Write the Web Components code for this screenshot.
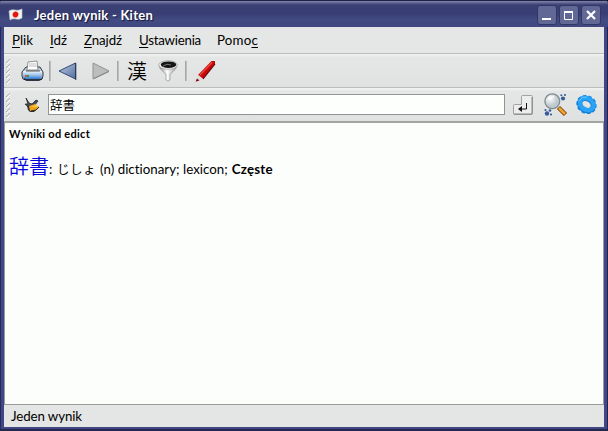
<!DOCTYPE html>
<html lang="pl"><head><meta charset="utf-8"><title>Jeden wynik - Kiten</title>
<style>html,body{margin:0;width:608px;height:431px;overflow:hidden;background:#111}</style></head>
<body><kiten-window></kiten-window>
<script>
class FitText extends HTMLElement{
 connectedCallback(){
  const r=this.attachShadow({mode:'open'});
  r.innerHTML='<style>:host{display:inline-block;white-space:nowrap;line-height:20px}</style><slot></slot>';
  const n=this.textContent.length,w=+this.getAttribute('w');
  this.style.letterSpacing=((w-this.getBoundingClientRect().width)/n)+'px';
 }
}
class TitleBar extends HTMLElement{
 connectedCallback(){
  this.attachShadow({mode:'open'}).innerHTML=`<style>
  :host{display:flex;align-items:center;height:27px;box-sizing:border-box;padding:2px 7px 0 8px;color:#fff;font-weight:700;font-size:13px;text-shadow:1px 1px 1px #111538;background:linear-gradient(#202244 0 1px,#777aa4 1px 2px,#5a5e8c 3px,#3b4073 5px,#383e74 13px,#424b82 20px,#404781)}
  svg{display:block}.t{flex:1;padding:1px 0 0 10px}.b{display:flex;gap:2px}
  .b svg{width:18px;height:18px;background:#626895;border:1px solid #303765;border-radius:3px;box-sizing:content-box}</style>
  <svg width="16" height="16" viewBox="0 0 16 16"><path d="M1 4Q4 2 7 3t7-1v9q-3 2-6 1t-6 1z" fill="#f1f1f0" stroke="#c6c6cf" stroke-width=".6"/><ellipse cx="7.5" cy="7.5" rx="2.8" ry="3" fill="#e31612" transform="rotate(25 7.5 7.5)"/></svg>
  <div class="t"><fit-text w="119">Jeden wynik - Kiten</fit-text></div>
  <div class="b"><svg viewBox="0 0 18 18"><path d="M4 12h9v2H4z" fill="#fff"/></svg>
  <svg viewBox="0 0 18 18"><path d="M4.5 5.5h8v8h-8z" fill="none" stroke="#fff"/><path d="M4 5h9v2H4z" fill="#fff"/></svg>
  <svg viewBox="0 0 18 18"><path d="M5 5l8 8M13 5l-8 8" stroke="#fff" stroke-width="2.2"/></svg></div>`;
 }
}
class MenuBar extends HTMLElement{
 connectedCallback(){
  this.attachShadow({mode:'open'}).innerHTML=`<style>:host{display:flex;height:26px;padding:3px 0 0 8px;gap:17px;box-sizing:border-box;background:#e5e7e6}u{text-underline-offset:2px;text-decoration-thickness:1px}</style>
  <fit-text w="21"><u>P</u>lik</fit-text><fit-text w="17"><u>I</u>dź</fit-text><fit-text w="38"><u>Z</u>najdź</fit-text><fit-text w="62"><u>U</u>stawienia</fit-text><fit-text w="41" style="margin-left:-1px">Pomo<u>c</u></fit-text>`;
 }
}
class ToolRow extends HTMLElement{
 connectedCallback(){
  this.attachShadow({mode:'open'}).innerHTML=`<style>:host{display:flex;align-items:center;height:34px;box-sizing:border-box;border-top:1px solid #bcbebd;background:linear-gradient(#f0f1f0 0 1px,#e5e6e6 3px,#e0e1e1)}svg{flex:none}</style>
  <svg width="8" height="28" viewBox="0 0 8 28"><path stroke="#a9abaa" stroke-width=".9" d="M2 6l4-4M2 11l4-4M2 16l4-4M2 21l4-4M2 26l4-4"/><path stroke="#fff" stroke-width=".8" d="M3 7l3-3M3 12l3-3M3 17l3-3M3 22l3-3M3 27l3-3"/></svg><slot></slot>`;
 }
}
const icons={
 print:[24,22,`<defs><linearGradient id="g" x2="0" y2="1"><stop stop-color="#f4f9ff"/><stop offset=".5" stop-color="#9fc3e9"/><stop offset="1" stop-color="#2d78d1"/></linearGradient></defs><path d="M5 7h14l3 5v4q0 4-4 4H5q-4 0-4-4v-4z" fill="#bcc9d8" stroke="#353b45"/><path d="M2 11h19v5q0 3-3 3H5q-3 0-3-3z" fill="url(#g)"/><path d="M7 2l9-1 1 9H6z" fill="#fff" stroke="#777" stroke-width=".8"/><path d="M8 4h7M8 6h8" stroke="#bbb"/><path d="M5 11h14" stroke="#555"/><path d="M5 15h3v2H5z" fill="#23a457"/><path d="M4 15h2v2H4z" fill="#ec4d34"/><path d="M3 18.5q1 1.5 3 1.5h12q2 0 3-1.5" stroke="#111a28" fill="none" stroke-width="1.3"/>`],
 back:[20,20,`<defs><linearGradient id="g" x2="1" y2="1"><stop stop-color="#bdcbe5"/><stop offset="1" stop-color="#546d9c"/></linearGradient></defs><path d="M17.5 2v16L1 10z" fill="url(#g)" stroke="#354b76"/><path d="M17.8 2v17" stroke="#25324f"/>`],
 forward:[20,20,`<path d="M2 2v16l16-8z" fill="#bdbdbd" stroke="#929292"/><path d="M3 17.5l15-7" stroke="#858585"/>`],
 filter:[20,22,`<defs><linearGradient id="g"><stop stop-color="#888"/><stop offset=".45" stop-color="#fff"/><stop offset="1" stop-color="#999"/></linearGradient></defs><path d="M1 5q0 4 7 9v6q2 2 4 0v-6q7-5 7-9z" fill="url(#g)" stroke="#929292" stroke-width=".7"/><ellipse cx="10" cy="5" rx="9.3" ry="4.3" fill="#eee" stroke="#999" stroke-width=".7"/><ellipse cx="10.5" cy="4.7" rx="7.7" ry="3.3" fill="#141414"/><path d="M5 6q4-3 8-1" stroke="#777" fill="none"/>`],
 pencil:[22,24,`<path d="M4 16L17.5 2H21v3L9 20z" fill="#c5090b"/><path d="M6 16L18 3.5" stroke="#f14b43" stroke-width="1.2"/><path d="M9 20L21 5" stroke="#650006" stroke-width="1.2"/><path d="M4.5 16l4.5 4-6 2z" fill="#dedbd9"/><path d="M3 19.5l2.5 2-4 1.3z" fill="#830812"/>`],
 clear:[16,16,`<path d="M2 1l3 5 3 1 4-4 2 1-4 5-5 2-4-4 3 0z" fill="#454d55" stroke="#252a2e" stroke-width=".8"/><path d="M3 9l3-1 2 5 5-1-3 3-4 0-2-2z" fill="#2e3338"/><path d="M5 9l6-2 4 3-3 3-6 1z" fill="#f0a41c"/><path d="M7 10l5-2 2 2" fill="#ffd04a"/><path d="M7 14l5-1 3-3" stroke="#332818" fill="none"/>`],
 enter:[20,20,`<path d="M8.5 1.5q0-1 1-1h9q1 0 1 1v17q0 1-1 1h-17q-1 0-1-1v-8q0-1 1-1h7z" fill="#ededed" stroke="#a1a1a1"/><path d="M19 2v17H1" fill="none" stroke="#858585"/><path d="M13.5 8v6H6" stroke="#111" fill="none"/><path d="M5 14l4-3v6z" fill="#111"/>`],
 find:[24,24,`<defs><radialGradient id="g" cx=".35" cy=".3"><stop stop-color="#fff"/><stop offset="1" stop-color="#bfc9ce"/></radialGradient></defs><path d="M14.5 14.5l7 7" stroke="#79430a" stroke-width="4.5"/><path d="M15 15l6 6" stroke="#f4a432" stroke-width="2.7"/><circle cx="8.3" cy="8.3" r="7.4" fill="url(#g)" stroke="#818b90" stroke-width="1.3"/><path d="M4 6q2-3 6-2" stroke="#fff" fill="none"/><g fill="#375d9c"><circle cx="19" cy="5.5" r="2.1"/><circle cx="21" cy="2" r="1.1"/><circle cx="17.3" cy="2.3" r="1"/><circle cx="3" cy="20.5" r="2.2"/><circle cx="1.5" cy="17" r="1.1"/><circle cx="6" cy="17.5" r="1.3"/><circle cx="7" cy="21.5" r="1.1"/></g>`],
 gear:[22,22,`<g transform="rotate(30 10.5 10.5)" fill="none"><ellipse cx="10.5" cy="10.5" rx="9" ry="7.8" stroke="#168be6" stroke-width="3" stroke-dasharray="3.3 2"/><ellipse cx="10.5" cy="10.5" rx="7.2" ry="5.7" stroke="#1179ce" stroke-width="5.3"/><ellipse cx="10.5" cy="10" rx="7.2" ry="5.7" stroke="#28a3f7" stroke-width="4.4"/></g><path d="M3 7q3-5 8-4" stroke="#64c8ff" fill="none"/>`]
};
class ToolIcon extends HTMLElement{
 connectedCallback(){const [w,h,p]=icons[this.getAttribute('name')];
  this.attachShadow({mode:'open'}).innerHTML=`<style>:host{display:block;flex:none}svg{display:block}</style><svg width="${w}" height="${h}" viewBox="0 0 ${w} ${h}">${p}</svg>`;
 }
}
class ResultView extends HTMLElement{
 connectedCallback(){
  this.attachShadow({mode:'open'}).innerHTML=`<style>:host{display:block;box-sizing:border-box;height:284px;background:#fcfefc;border:1px solid #9a9b9a;border-top:2px solid #a3a4a3;padding:1px 4px}
  h1{margin:0;font-size:11px;height:20px}p{display:flex;align-items:baseline;margin:7px 0 0;height:30px}
  .k{font-size:20px;line-height:30px;color:#0505dc;font-family:"Noto Sans CJK JP",sans-serif;font-weight:350}.j{font-family:"Noto Sans CJK JP",sans-serif;font-size:12.5px}</style>
  <h1><fit-text w="81">Wyniki od edict</fit-text></h1>
  <p><span class="k">辞書</span><fit-text w="8">:&nbsp;</fit-text><fit-text class="j" w="39">じしょ</fit-text><fit-text w="128" style="margin-left:4px">(n) dictionary; lexicon;</fit-text><b style="margin-left:4px"><fit-text w="41">Częste</fit-text></b></p>`;
 }
}
class KitenWindow extends HTMLElement{
 connectedCallback(){
  this.attachShadow({mode:'open'}).innerHTML=`<style>
  :host{display:flex;flex-direction:column;width:608px;height:431px;box-sizing:border-box;background:#414784;border-radius:3px 4px 0 0;overflow:hidden;font:13.3px Lato,"Noto Sans CJK JP",sans-serif;color:#000;box-shadow:inset 1px 0 #252b5e,inset -1px 0 #20254d,inset 0 -2px #22284f}
  main{width:600px;margin-left:4px;background:#e4e5e5;height:400px}
  i{width:2px;height:20px;background:linear-gradient(90deg,#a6a8a7 50%,#bcbdbd 50%)}
  .field{width:457px;height:21px;box-sizing:border-box;border:1px solid #929493;background:#fdfffd;margin-left:8px;padding-left:1px;line-height:19px;font-size:12.5px;font-family:"Noto Sans CJK JP",sans-serif}
  footer{height:22px;box-sizing:border-box;padding:1px 7px}
  .kanji{font:350 20px/28px "Noto Sans CJK JP",sans-serif;margin-left:8px;width:20px}
  </style><title-bar></title-bar><main><menu-bar></menu-bar>
  <tool-row><tool-icon name="print" style="margin-left:9px"></tool-icon><i style="margin-left:4px"></i><tool-icon name="back" style="margin-left:7px"></tool-icon><tool-icon name="forward" style="margin-left:13px"></tool-icon><i style="margin-left:6px"></i><span class="kanji">漢</span><tool-icon name="filter" style="margin-left:11px"></tool-icon><i style="margin-left:7px"></i><tool-icon name="pencil" style="margin-left:7px"></tool-icon></tool-row>
  <tool-row><tool-icon name="clear" style="margin-left:12px"></tool-icon><div class="field">辞書</div><tool-icon name="enter" style="margin-left:8px"></tool-icon><tool-icon name="find" style="margin-left:11px"></tool-icon><tool-icon name="gear" style="margin-left:8px"></tool-icon></tool-row>
  <result-view></result-view><footer><fit-text w="71">Jeden wynik</fit-text></footer></main>`;
 }
}
customElements.define('fit-text',FitText);customElements.define('title-bar',TitleBar);customElements.define('menu-bar',MenuBar);customElements.define('tool-row',ToolRow);customElements.define('tool-icon',ToolIcon);customElements.define('result-view',ResultView);customElements.define('kiten-window',KitenWindow);
</script></body></html>
